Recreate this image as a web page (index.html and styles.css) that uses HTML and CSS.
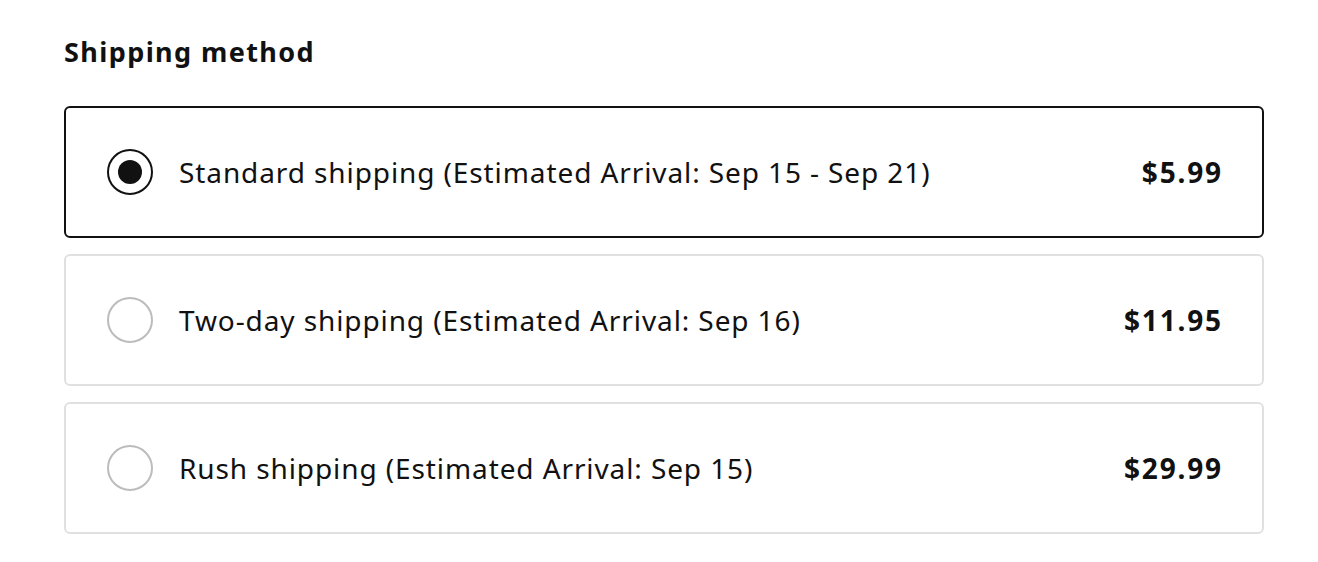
FILE: index.html
```html
<!DOCTYPE html>
<html lang="en">
<head>
    <meta charset="UTF-8">
    <meta name="viewport" content="width=device-width, initial-scale=1.0">
    <title>Shipping method</title>
    <link rel="stylesheet" href="styles.css">
</head>
<body>
    <div class="shipping">
        <h2>Shipping method</h2>

        <div class="options">
            <label class="option selected">
                <span class="radio"></span>
                <span class="label">Standard shipping (Estimated Arrival: Sep 15 - Sep 21)</span>
                <span class="price">$5.99</span>
            </label>
            <label class="option">
                <span class="radio"></span>
                <span class="label">Two-day shipping (Estimated Arrival: Sep 16)</span>
                <span class="price">$11.95</span>
            </label>
            <label class="option">
                <span class="radio"></span>
                <span class="label">Rush shipping (Estimated Arrival: Sep 15)</span>
                <span class="price">$29.99</span>
            </label>
        </div>
    </div>
</body>
</html>
```

FILE: styles.css
```css
body {
    font-family: "Noto Sans", "Lato", sans-serif;
    color: #111;
    background-color: #fff;
    margin: 0;
    padding: 0;
}
.shipping {
    width: 1200px;
    padding: 30px 0 0 64px;
}
.shipping h2 {
    margin: 0 0 32px;
    font-size: 27px;
    line-height: 44px;
    font-weight: 700;
    letter-spacing: 1.4px;
}
.options {
    display: flex;
    flex-direction: column;
    gap: 16px;
}
.option {
    display: flex;
    align-items: center;
    gap: 26px;
    padding: 41px 41px;
    border: 2px solid #e0e0e0;
    border-radius: 6px;
    cursor: pointer;
}
.option.selected {
    border-color: #111;
}
.radio {
    width: 42px;
    height: 42px;
    border: 2px solid #bcbcbc;
    border-radius: 50%;
    display: flex;
    align-items: center;
    justify-content: center;
    flex-shrink: 0;
}
.option.selected .radio {
    border-color: #111;
}
.option.selected .radio::after {
    content: "";
    width: 24px;
    height: 24px;
    border-radius: 50%;
    background-color: #111;
}
.label {
    flex: 1;
    font-size: 28px;
    letter-spacing: 0.9px;
}
.price {
    font-size: 28px;
    font-weight: 700;
    letter-spacing: 1.8px;
    margin-right: -1.8px;
}
```
